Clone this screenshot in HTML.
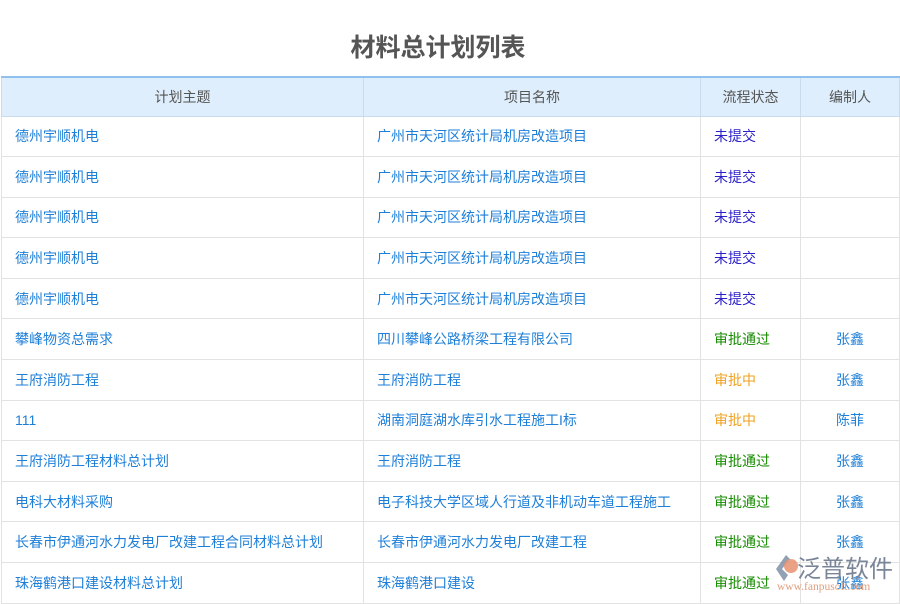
<html><head><style>
body{margin:0;width:900px;height:600px;overflow:hidden;background:#fff;font-family:"Liberation Sans","Noto Sans CJK SC",sans-serif;position:relative}
h1{position:absolute;top:33px;left:0;width:876px;text-align:center;margin:0;font-size:25px;color:#555;font-weight:bold;line-height:30px}
table{position:absolute;top:76px;left:1px;border-collapse:collapse;font-size:14px;table-layout:fixed}
th{background:#dfeefc;color:#555;font-weight:normal;height:39px;border:1px solid #c8dcee;border-top:2px solid #8fc0ee;padding:0}
td{height:39.6px;border:1px solid #e2e2e2;color:#1e7fd8;padding:0 0 0 13px;white-space:nowrap;overflow:hidden;box-sizing:border-box}
tr.r{height:40.6px}
td.c{text-align:center;padding:0}
.n{color:#2a1fc8}.g{color:#168c00}.o{color:#f0a020}
.wm{position:absolute;left:773px;top:551px;width:125px;height:48px}
</style></head><body>
<h1>材料总计划列表</h1>
<table>
<colgroup><col style="width:362px"><col style="width:337px"><col style="width:100px"><col style="width:99px"></colgroup>
<tr><th>计划主题</th><th>项目名称</th><th>流程状态</th><th>编制人</th></tr>
<tr class="r"><td>德州宇顺机电</td><td>广州市天河区统计局机房改造项目</td><td class="n">未提交</td><td></td></tr>
<tr class="r"><td>德州宇顺机电</td><td>广州市天河区统计局机房改造项目</td><td class="n">未提交</td><td></td></tr>
<tr class="r"><td>德州宇顺机电</td><td>广州市天河区统计局机房改造项目</td><td class="n">未提交</td><td></td></tr>
<tr class="r"><td>德州宇顺机电</td><td>广州市天河区统计局机房改造项目</td><td class="n">未提交</td><td></td></tr>
<tr class="r"><td>德州宇顺机电</td><td>广州市天河区统计局机房改造项目</td><td class="n">未提交</td><td></td></tr>
<tr class="r"><td>攀峰物资总需求</td><td>四川攀峰公路桥梁工程有限公司</td><td class="g">审批通过</td><td class="c">张鑫</td></tr>
<tr class="r"><td>王府消防工程</td><td>王府消防工程</td><td class="o">审批中</td><td class="c">张鑫</td></tr>
<tr class="r"><td>111</td><td>湖南洞庭湖水库引水工程施工I标</td><td class="o">审批中</td><td class="c">陈菲</td></tr>
<tr class="r"><td>王府消防工程材料总计划</td><td>王府消防工程</td><td class="g">审批通过</td><td class="c">张鑫</td></tr>
<tr class="r"><td>电科大材料采购</td><td>电子科技大学区域人行道及非机动车道工程施工</td><td class="g">审批通过</td><td class="c">张鑫</td></tr>
<tr class="r"><td>长春市伊通河水力发电厂改建工程合同材料总计划</td><td>长春市伊通河水力发电厂改建工程</td><td class="g">审批通过</td><td class="c">张鑫</td></tr>
<tr class="r"><td>珠海鹤港口建设材料总计划</td><td>珠海鹤港口建设</td><td class="g">审批通过</td><td class="c">张鑫</td></tr>
</table>
<div class="wm">
<svg width="28" height="30" style="position:absolute;left:0;top:2px" viewBox="0 0 28 30"><path d="M13 2 L3 16 L11 28 L15 22 L9 16 L17 6Z" fill="#8090a8" opacity=".85"/><circle cx="18" cy="13" r="7" fill="#e89070" opacity=".85"/></svg>
<div style="position:absolute;left:24px;top:-2px;font-size:24px;color:#7a8598;letter-spacing:0;white-space:nowrap">泛普软件</div>
<div style="position:absolute;left:4px;top:30px;font-size:11.5px;color:#e0a080;font-family:'Liberation Serif',serif;white-space:nowrap">www.fanpusoft.com</div>
</div>
</body></html>
